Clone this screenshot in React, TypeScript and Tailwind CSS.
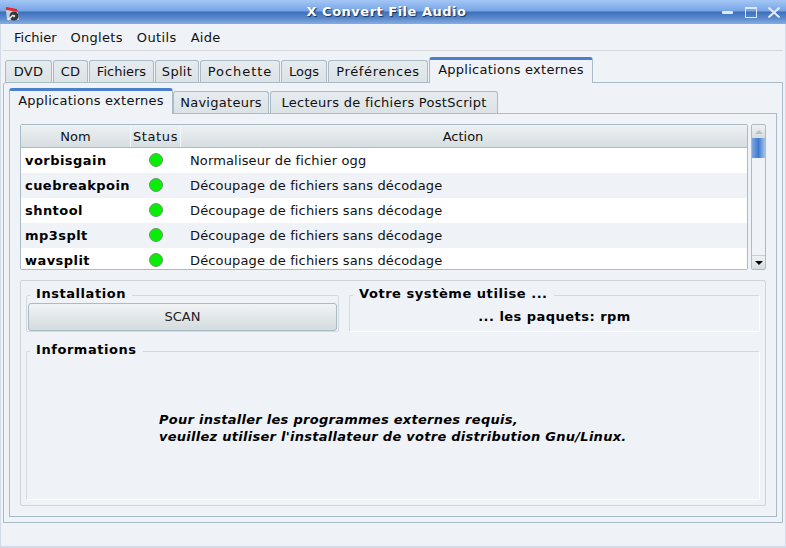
const outerTabs = [
  { label: "DVD", w: "w-[47px] tracking-[0.3px]" },
  { label: "CD", w: "w-[35px] tracking-[0.3px]" },
  { label: "Fichiers", w: "w-[65px]" },
  { label: "Split", w: "w-[44px] tracking-[0.3px]" },
  { label: "Pochette", w: "w-[80px] tracking-[0.95px]" },
  { label: "Logs", w: "w-[46px]" },
  { label: "Préférences", w: "w-[100px] tracking-[0.65px]" },
];

const rows = [
  { name: "vorbisgain", action: "Normaliseur de fichier ogg" },
  { name: "cuebreakpoin", action: "Découpage de fichiers sans décodage" },
  { name: "shntool", action: "Découpage de fichiers sans décodage" },
  { name: "mp3splt", action: "Découpage de fichiers sans décodage" },
  { name: "wavsplit", action: "Découpage de fichiers sans décodage" },
];

function Tab({ label, className }: { label: string; className: string }) {
  return (
    <div
      className={`flex h-[22px] items-center justify-center rounded-t-[3px] border border-b-0 border-[#a9bcc6] bg-gradient-to-b from-[#e6ebee] to-[#dbe3e6] whitespace-nowrap ${className}`}
    >
      {label}
    </div>
  );
}

function ActiveTab({ label, className }: { label: string; className: string }) {
  return (
    <div
      className={`relative z-10 -mb-px flex h-[26px] items-center justify-center rounded-t-[3px] border-x border-t-[3px] border-x-[#a9bcc6] border-t-[#4a7fca] bg-[#eff2f7] pb-[3px] tracking-[0.26px] whitespace-nowrap ${className}`}
    >
      {label}
    </div>
  );
}

function GroupLabel({ children }: { children: string }) {
  return (
    <span className="absolute -top-[10px] left-[3px] bg-[#eff2f7] px-[6px] text-[13px] leading-[16px] font-bold tracking-[0.55px] text-black not-italic">
      {children}
    </span>
  );
}

export default function App() {
  return (
    <div className="flex h-[548px] w-[786px] flex-col overflow-hidden bg-[#eff2f7] font-['DejaVu_Sans',sans-serif] text-[13px] text-[#111]">
      {/* title bar */}
      <div className="relative flex h-[24px] shrink-0 items-center justify-center bg-[linear-gradient(to_bottom,#a4c6f5_0px,#76a5e6_11px,#3d70ba_12px,#5a88cc_18px,#86acE2_24px)] pr-[13px] text-[13px] font-bold tracking-[0.5px] text-white [text-shadow:1px_1px_1px_#1a2f55]">
        <svg className="absolute top-[6px] left-[5px]" width="15" height="16" viewBox="0 0 15 16">
          <path d="M1 1 L12 3 L13 6 L1 4 Z" fill="#e8262c" />
          <path d="M1 4 L13 6 L14 14 L2 14 Z" fill="#c6d0dc" />
          <circle cx="9" cy="10" r="4.5" fill="#37383c" />
          <circle cx="9" cy="10" r="1.2" fill="#d9dee6" />
          <path d="M3 14 L8 9" stroke="#f3f3f3" strokeWidth="1.5" />
        </svg>
        X Convert File Audio
        <div className="absolute top-[7px] right-[6px] flex items-center">
          <div className="mr-[12px] h-[3px] w-[11px] rounded-[1px] bg-[#dfe8f5]" />
          <div className="mr-[11px] h-[11px] w-[12px] border border-t-2 border-[#dfe8f5]" />
          <svg width="12" height="11" viewBox="0 0 12 11">
            <path d="M0.5 0.5 L11.5 10.5 M11.5 0.5 L0.5 10.5" stroke="#e4ebf6" strokeWidth="2" />
          </svg>
        </div>
      </div>

      <div className="flex flex-1 flex-col border-x border-b-2 border-x-[#d3dce6] border-b-[#d3dce6] px-[2px]">
        {/* menu */}
        <div className="flex h-[27px] shrink-0 items-center gap-[14px] border-b border-[#d6dadf] pt-[1px] pl-[11px]">
          <span>Fichier</span>
          <span className="tracking-[0.3px]">Onglets</span>
          <span className="tracking-[0.4px]">Outils</span>
          <span className="tracking-[0.2px]">Aide</span>
        </div>

        {/* outer tabs */}
        <div className="mt-[5px] flex h-[26px] shrink-0 items-end gap-px pl-[2px]">
          {outerTabs.map((t) => (
            <Tab key={t.label} label={t.label} className={t.w} />
          ))}
          <ActiveTab label="Applications externes" className="w-[164px]" />
        </div>

        {/* outer pane */}
        <div className="flex h-[441px] w-[780px] shrink-0 flex-col rounded-tl-[3px] border border-[#a9bcc6] px-[5px] pt-[4px]">
          {/* inner tabs */}
          <div className="flex h-[26px] shrink-0 items-end gap-px">
            <ActiveTab label="Applications externes" className="-mr-px w-[164px]" />
            <Tab label="Navigateurs" className="w-[96px] tracking-[0.28px]" />
            <Tab label="Lecteurs de fichiers PostScript" className="w-[228px] tracking-[0.28px]" />
          </div>

          {/* inner pane */}
          <div className="flex h-[404px] w-[768px] shrink-0 flex-col gap-[10px] border border-[#a9bcc6] p-[10px]">
            <div className="flex h-[146px] shrink-0 gap-[3px]">
              {/* table */}
              <div className="w-[728px] shrink-0 overflow-hidden rounded-[2px] border border-[#a9bcc6] bg-white">
                <div className="flex h-[23px] border-b border-[#a9bcc6] bg-gradient-to-b from-[#eef1f3] to-[#d6dee1] pt-px">
                  <div className="flex w-[110px] items-center justify-center border-r border-[#f4f6f8]">Nom</div>
                  <div className="flex w-[50px] items-center justify-center border-r border-[#f4f6f8] tracking-[0.6px]">Status</div>
                  <div className="flex flex-1 items-center justify-center pr-[2px]">Action</div>
                </div>
                {rows.map((r, i) => (
                  <div key={r.name} className={`flex h-[25px] items-center ${i % 2 ? "bg-[#eff2f7]" : "bg-white"}`}>
                    <div className="w-[110px] overflow-hidden pl-[4px] font-bold tracking-[0.45px] whitespace-nowrap text-black">{r.name}</div>
                    <div className="flex w-[50px] justify-center">
                      <div className="-mt-px h-[14px] w-[14px] rounded-full border border-[#6a9a6a] bg-[#08ee08]" />
                    </div>
                    <div className="pl-[9px] tracking-[0.14px]">{r.action}</div>
                  </div>
                ))}
              </div>
              {/* scrollbar */}
              <div className="flex w-[15px] shrink-0 flex-col overflow-hidden rounded-[2px] border border-[#a9bcc6] bg-[#eff2f7]">
                <div className="flex h-[13px] shrink-0 items-center justify-center bg-gradient-to-b from-[#eef1f3] to-[#d6dee1]">
                  <div className="border-x-[4px] border-b-[4px] border-x-transparent border-b-[#b4c2ca]" />
                </div>
                <div className="h-[20px] shrink-0 bg-gradient-to-r from-[#7fa6e0] via-[#3f78cc] to-[#a8c4ec]" />
                <div className="flex-1" />
                <div className="flex h-[14px] shrink-0 items-center justify-center border-t border-[#c4d0d6] bg-gradient-to-b from-[#eef1f3] to-[#d6dee1]">
                  <div className="border-x-[4px] border-t-[4px] border-x-transparent border-t-black" />
                </div>
              </div>
            </div>

            {/* bottom group */}
            <div className="flex h-[226px] w-[746px] shrink-0 flex-col gap-[19px] rounded-[2px] border border-[#cdd5da] px-[5px] pt-[14px]">
              <div className="flex h-[37px] shrink-0 gap-[10px]">
                <div className="relative flex w-[313px] shrink-0 rounded-[2px] border border-[#d3dade] p-px">
                  <GroupLabel>Installation</GroupLabel>
                  <div className="mt-[6px] flex h-[28px] w-full items-center justify-center rounded-[3px] border border-[#a9bcc6] bg-gradient-to-b from-[#f1f4f5] to-[#d3dbde] text-[#222]">
                    SCAN
                  </div>
                </div>
                <div className="relative flex w-[411px] shrink-0 items-center justify-center rounded-[2px] border border-[#d3dade] border-r-white border-b-white pt-[6px] font-bold tracking-[0.47px] text-black">
                  <GroupLabel>Votre système utilise ...</GroupLabel>
                  ... les paquets: rpm
                </div>
              </div>
              <div className="relative flex h-[149px] w-[734px] shrink-0 flex-col justify-center rounded-[2px] border border-[#d3dade] border-r-white border-b-white pt-[5px] pl-[132px] font-bold text-black italic">
                <GroupLabel>Informations</GroupLabel>
                <div className="leading-[17px] tracking-[0.27px]">Pour installer les programmes externes requis,</div>
                <div className="leading-[17px] tracking-[0.27px]">veuillez utiliser l'installateur de votre distribution Gnu/Linux.</div>
              </div>
            </div>
          </div>
        </div>
      </div>
    </div>
  );
}
